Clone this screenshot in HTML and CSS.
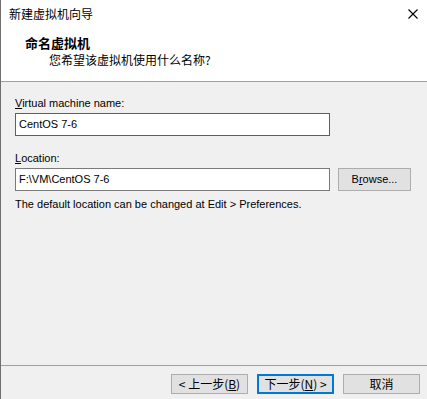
FILE: index.html
```html
<!DOCTYPE html>
<html lang="zh">
<head>
<meta charset="utf-8">
<title>新建虚拟机向导</title>
<link rel="stylesheet" href="styles.css">
</head>
<body>
<div class="window">
  <div class="header">
    <div class="titlebar">
      <span class="title">新建虚拟机向导</span>
      <svg class="close" width="10" height="10" viewBox="0 0 10 10"><path d="M0.5 0.5L9.5 9.5M9.5 0.5L0.5 9.5" stroke="#000" stroke-width="1.1" fill="none"/></svg>
    </div>
    <div class="head-title">命名虚拟机</div>
    <div class="head-sub">您希望该虚拟机使用什么名称?</div>
  </div>
  <div class="content">
    <div class="label label-first"><u>V</u>irtual machine name:</div>
    <div class="field field-focus">CentOS 7-6</div>
    <div class="label label-second"><u>L</u>ocation:</div>
    <div class="row">
      <div class="field">F:\VM\CentOS 7-6</div>
      <div class="btn btn-browse">B<u>r</u>owse...</div>
    </div>
    <div class="note">The default location can be changed at Edit &gt; Preferences.</div>
  </div>
  <div class="footer">
    <div class="btn btn-cjk">&lt; 上一步(<u>B</u>)</div>
    <div class="btn btn-cjk btn-default">下一步(<u>N</u>) &gt;</div>
    <div class="btn btn-cjk">取消</div>
  </div>
</div>
</body>
</html>
```
FILE: styles.css
```css
html, body {
  margin: 0;
  padding: 0;
}
body {
  width: 427px;
  height: 399px;
  overflow: hidden;
  font-family: "Liberation Sans", "Noto Sans CJK SC", sans-serif;
  font-size: 11px;
  color: #000;
}
.window {
  box-sizing: border-box;
  width: 427px;
  height: 399px;
  background: #f0f0f0;
  border-left: 1px solid #707070;
  display: flex;
  flex-direction: column;
}
.header {
  background: #fff;
  height: 81px;
  border-bottom: 1px solid #a0a0a0;
  flex: none;
}
.titlebar {
  height: 30px;
  display: flex;
  align-items: flex-start;
  justify-content: space-between;
}
.title {
  font-family: "Noto Sans CJK SC", sans-serif;
  font-size: 12px;
  line-height: 16px;
  margin-top: 6px;
  margin-left: 8px;
}
.close {
  margin-top: 9px;
  margin-right: 9px;
}
.head-title {
  font-family: "Noto Sans CJK SC", sans-serif;
  font-weight: bold;
  font-size: 13px;
  line-height: 18px;
  margin-top: 4px;
  margin-left: 24px;
}
.head-sub {
  font-family: "Noto Sans CJK SC", sans-serif;
  font-size: 12px;
  line-height: 16px;
  margin-left: 48px;
}
.content {
  padding: 0 14px;
}
.label {
  line-height: 16px;
}
.label-first {
  margin-top: 13px;
}
.label-second {
  margin-top: 14px;
}
.field {
  box-sizing: border-box;
  width: 315px;
  height: 23px;
  margin-top: 2px;
  background: #fff;
  border: 1px solid #7a7a7a;
  padding: 0 3px;
  line-height: 21px;
}
.field-focus {
  border-color: #0078d7;
}
.row {
  display: flex;
  align-items: flex-start;
  margin-top: 2px;
}
.row .field {
  margin-top: 0;
}
.btn {
  box-sizing: border-box;
  width: 77px;
  height: 20px;
  background: #e1e1e1;
  border: 1px solid #adadad;
  text-align: center;
  line-height: 18px;
}
.btn-cjk {
  font-family: "Noto Sans CJK SC", sans-serif;
  font-size: 12px;
}
.btn-browse {
  width: 73px;
  height: 23px;
  line-height: 21px;
  margin-left: 8px;
}
.btn-default {
  border: 2px solid #0078d7;
  line-height: 16px;
}
.note {
  line-height: 16px;
  margin-top: 5px;
}
.footer {
  margin-top: auto;
  border-top: 1px solid #a0a0a0;
  height: 34px;
  display: flex;
  justify-content: flex-end;
  align-items: flex-start;
  gap: 9px;
  padding: 8px 7px 0 0;
  box-sizing: border-box;
  flex: none;
}
u {
  text-decoration: underline;
  text-underline-offset: 1px;
}
```
